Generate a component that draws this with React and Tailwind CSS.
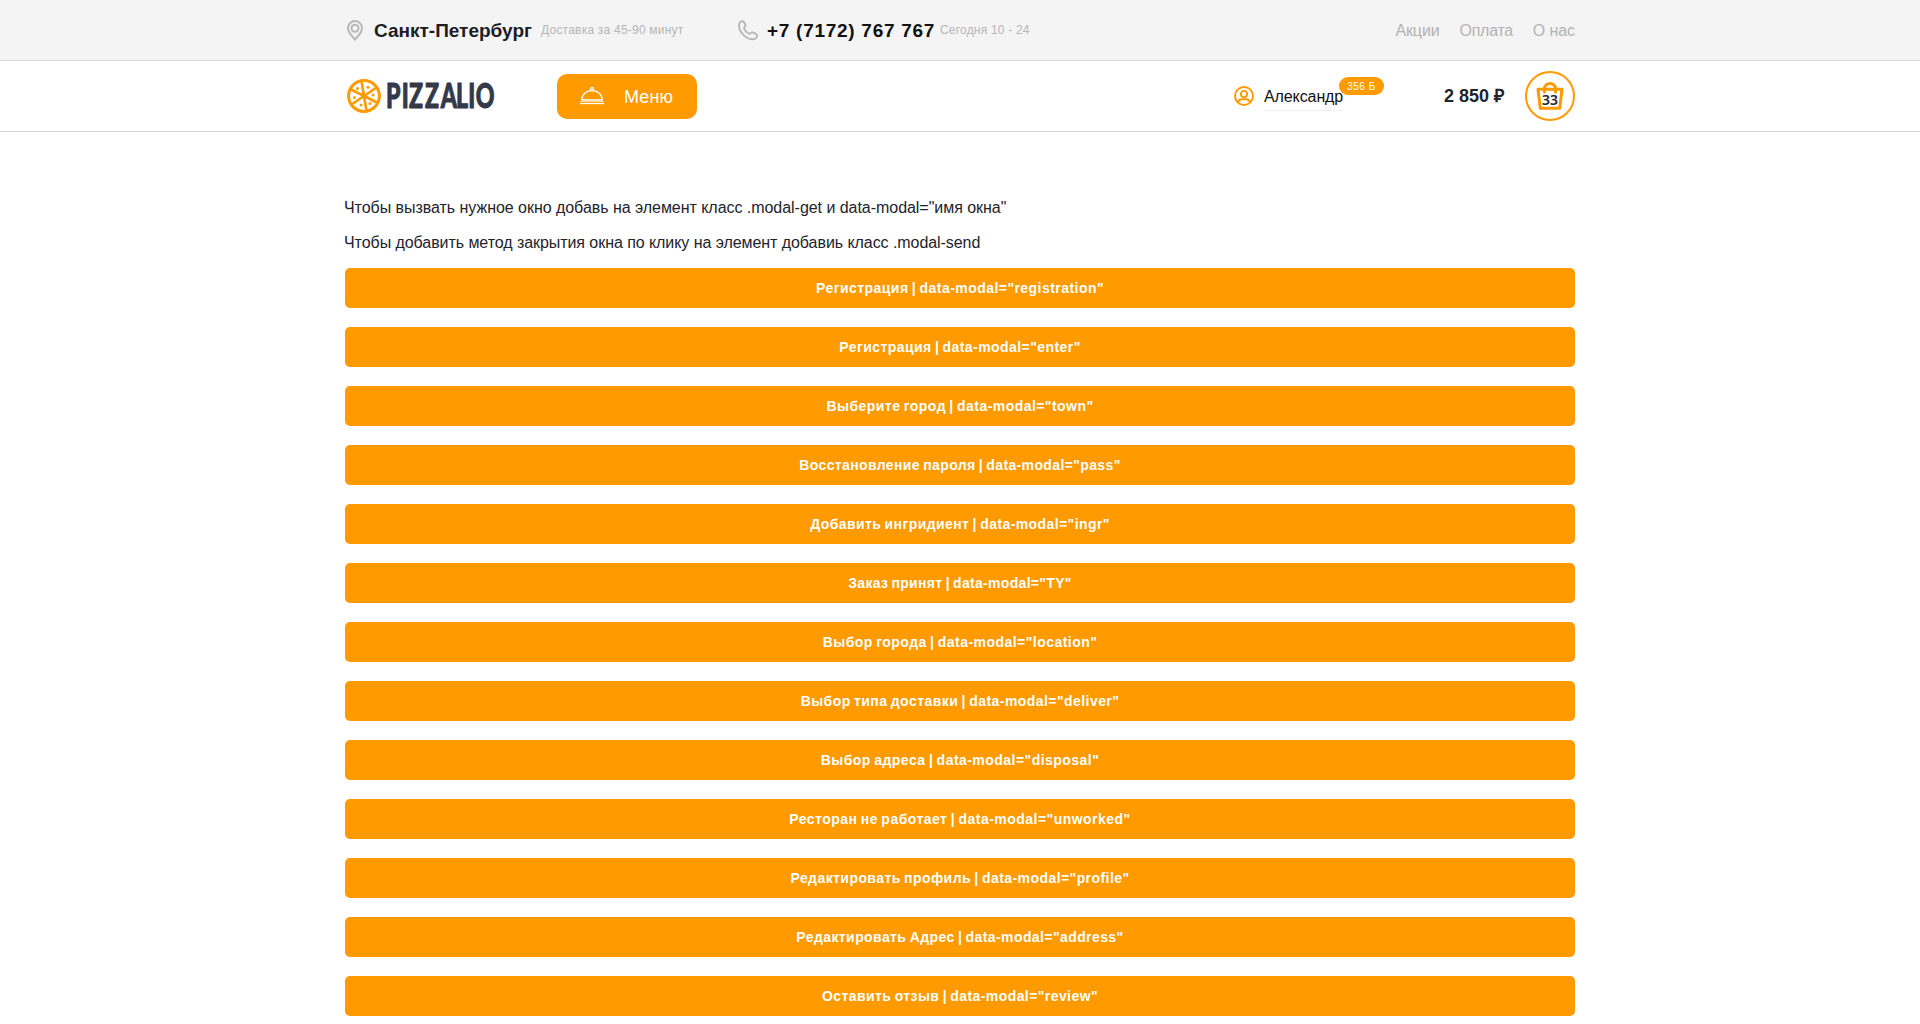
import React from "react";

const items = [
  ['Регистрация', 'registration', 'tracking-[0.45px]'],
  ['Регистрация', 'enter', 'tracking-[0.43px]'],
  ['Выберите город', 'town', 'tracking-[0.45px]'],
  ['Восстановление пароля', 'pass', 'tracking-[0.37px]'],
  ['Добавить ингридиент', 'ingr', 'tracking-[0.41px]'],
  ['Заказ принят', 'TY', 'tracking-[0.31px]'],
  ['Выбор города', 'location', 'tracking-[0.46px]'],
  ['Выбор типа доставки', 'deliver', 'tracking-[0.44px]'],
  ['Выбор адреса', 'disposal', 'tracking-[0.46px]'],
  ['Ресторан не работает', 'unworked', 'tracking-[0.47px]'],
  ['Редактировать профиль', 'profile', 'tracking-[0.43px]'],
  ['Редактировать Адрес', 'address', 'tracking-[0.41px]'],
  ['Оставить отзыв', 'review', 'tracking-[0.42px]'],
];

function PinIcon() {
  return (
    <svg width="16" height="21" viewBox="0 0 16 21" fill="none" stroke="#b6b7b7" strokeWidth="2">
      <path d="M8 19.6C6.8 17.7 1 13.2 1 8.2a7 7.2 0 0 1 14 0c0 5-5.8 9.5-7 11.4z" strokeLinejoin="round" />
      <circle cx="8" cy="8.2" r="3.5" />
    </svg>
  );
}

function PhoneIcon() {
  return (
    <svg width="20" height="21" viewBox="0 0 20 21" fill="none" stroke="#b6b7b7" strokeWidth="1.9" strokeLinejoin="round">
      <path d="M1 5.2C1 3.3 2.6 1.2 4.3 1.1c.9 0 1.4.6 1.8 1.4l1.2 2.3c.4.9.1 1.7-.6 2.3-.8.7-.8 1.3-.4 2.1 1 1.9 2.4 3.3 4.3 4.3.9.5 1.5.4 2.2-.4.7-.8 1.5-1.1 2.4-.6l2.5 1.3c.9.5 1.4 1.1 1.3 2-.2 1.9-2.1 3.5-4.2 3.5C8.2 19.3 1 12.1 1 5.2z" />
    </svg>
  );
}

function Pizza() {
  return (
    <svg width="34" height="34" viewBox="0 0 34 34">
      <circle cx="17" cy="17" r="15.4" fill="#fff" stroke="#ff9a00" strokeWidth="3" />
      <path d="M14.5 2l5 30M4 10.5l26 13M4.5 25.5L29.5 8.5" stroke="#ff9a00" strokeWidth="2.6" />
      <g fill="#ff9a00">
        <circle cx="10.5" cy="9.5" r="1.5" />
        <circle cx="21" cy="8.3" r="1.5" />
        <circle cx="26" cy="16" r="1.5" />
        <circle cx="23" cy="24.5" r="1.5" />
        <circle cx="14" cy="26" r="1.5" />
        <circle cx="7.5" cy="18.5" r="1.5" />
      </g>
    </svg>
  );
}

function Cloche() {
  return (
    <svg width="24" height="18" viewBox="0 0 24 18" fill="none" stroke="#fff" strokeWidth="1.3">
      <path d="M1.8 13V12.5a10.2 9 0 0 1 20.4 0V13z" />
      <circle cx="12" cy="2" r="1.5" />
      <path d="M0 14.5h24" strokeWidth="1" opacity=".6" />
      <path d="M0 16.5h24" />
    </svg>
  );
}

function UserIcon() {
  return (
    <svg width="20" height="20" viewBox="0 0 20 20" fill="none" stroke="#ff9a00" strokeWidth="1.9">
      <circle cx="10" cy="10" r="9" />
      <circle cx="10" cy="8" r="3.1" />
      <path d="M4 16c.6-2 2.3-2.8 4.2-2.8h3.6c1.9 0 3.6.8 4.2 2.8" />
    </svg>
  );
}

function Bag() {
  return (
    <svg width="28" height="28" viewBox="0 0 28 28" fill="none" stroke="#ff9a00" strokeWidth="3" strokeLinejoin="round">
      <path d="M2 7.2h24l-2.3 19H4.3z" />
      <path d="M8.5 10V6.5a5.500 5 0 0 1 11 0V10" strokeLinecap="round" />
    </svg>
  );
}

export default function App() {
  return (
    <div className="h-[1024px] overflow-hidden bg-white font-['Liberation_Sans',sans-serif] text-[#23232b]">
      <div className="h-[61px] border-b border-[#dadada] bg-[#f4f4f4]">
        <div className="mx-auto flex h-[60px] w-[1230px] items-center">
          <div className="flex w-[391px] items-center pl-[2px]">
            <PinIcon />
            <b className="ml-[11px] w-[167px] whitespace-nowrap pt-[2px] text-[19px] text-[#1c1d24]">Санкт-Петербург</b>
            <span className="whitespace-nowrap text-[12px] tracking-[0.22px] text-[#b6b6b6]">Доставка за 45-90 минут</span>
          </div>
          <div className="flex flex-1 items-center pl-[2px]">
            <PhoneIcon />
            <b className="ml-[9px] w-[173px] whitespace-nowrap pt-[2px] text-[19px] tracking-[0.72px] text-[#111]">+7 (7172) 767 767</b>
            <span className="whitespace-nowrap text-[12px] tracking-[0.2px] text-[#b6b6b6]">Сегодня 10 - 24</span>
          </div>
          <nav className="flex gap-5 whitespace-nowrap pt-[2px] text-[16px] text-[#b3b3b3]">
            <span className="tracking-[-0.1px]">Акции</span>
            <span className="tracking-[-0.3px]">Оплата</span>
            <span className="tracking-[-0.1px]">О нас</span>
          </nav>
        </div>
      </div>
      <div className="h-[71px] border-b border-[#dadada]">
        <div className="mx-auto flex h-[70px] w-[1230px] items-center">
          <div className="flex w-[212px] items-center gap-[5px] pl-[2px]">
            <Pizza />
            <svg width="112" height="50" viewBox="0 0 112 50" className="overflow-visible">
              <text transform="scale(0.68 1)" y="37.5" x="0 23 34 57.500 80.500 103 121 132" fontSize="34" fill="#343849" stroke="#343849" strokeWidth="1" strokeLinejoin="round" className="font-['Lato',sans-serif] font-black">PIZZALIO</text>
            </svg>
          </div>
          <button className="flex h-[45px] w-[140px] items-center rounded-[10px] bg-[#ff9a00] pl-[23px] text-[18px] text-white">
            <Cloche />
            <span className="ml-5 pt-[2px] tracking-[0.1px]">Меню</span>
          </button>
          <div className="relative ml-auto flex h-[70px] w-[210px] items-center">
            <UserIcon />
            <span className="ml-[10px] border-b border-[#f0f0f0] pt-[4px] pb-px text-[16px] tracking-[-0.1px] text-[#111]">Александр</span>
            <span className="absolute left-[105px] top-[16px] flex h-[18px] w-[45px] items-center justify-center rounded-full bg-[#ff9a00] text-[10px] tracking-[0.5px] text-white">356 Б</span>
          </div>
          <b className="w-[81px] whitespace-nowrap pt-px text-[18px]">2 850 ₽</b>
          <div className="relative flex h-[50px] w-[50px] items-center justify-center rounded-full border-2 border-[#ff9a00]">
            <Bag />
            <span className="absolute left-[15px] top-[18px] font-['Noto_Sans',sans-serif] text-[14px] leading-[18px] font-semibold">33</span>
          </div>
        </div>
      </div>
      <main className="mx-auto w-[1230px] pt-[64px] text-[16px] leading-[24px]">
        <p className="-ml-px mb-[11px] tracking-[-0.04px]">Чтобы вызвать нужное окно добавь на элемент класс .modal-get и data-modal="имя окна"</p>
        <p className="-ml-px mb-[13px] tracking-[-0.06px]">Чтобы добавить метод закрытия окна по клику на элемент добавиь класс .modal-send</p>
        <div className="flex flex-col gap-[19px]">
          {items.map(([label, modal, tracking]) => (
            <button key={modal} className={`h-[40px] rounded-[5px] bg-[#ff9a00] text-[14px] font-bold text-white [word-spacing:-1px] ${tracking}`}>
              {label} | data-modal="{modal}"
            </button>
          ))}
        </div>
      </main>
    </div>
  );
}
